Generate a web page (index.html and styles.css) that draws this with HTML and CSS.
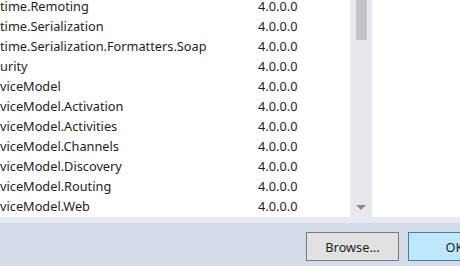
FILE: index.html
```html
<!DOCTYPE html>
<html lang="en">
<head>
  <meta charset="UTF-8">
  <title>Reference Manager</title>
  <link rel="stylesheet" href="styles.css">
</head>
<body>

  <div class="main">
    <div class="lista">
      <div class="filas">
        <div class="fila"><span class="nombre">time.Remoting</span><span class="version">4.0.0.0</span></div>
        <div class="fila"><span class="nombre">time.Serialization</span><span class="version">4.0.0.0</span></div>
        <div class="fila"><span class="nombre">time.Serialization.Formatters.Soap</span><span class="version">4.0.0.0</span></div>
        <div class="fila"><span class="nombre">urity</span><span class="version">4.0.0.0</span></div>
        <div class="fila"><span class="nombre">viceModel</span><span class="version">4.0.0.0</span></div>
        <div class="fila"><span class="nombre">viceModel.Activation</span><span class="version">4.0.0.0</span></div>
        <div class="fila"><span class="nombre">viceModel.Activities</span><span class="version">4.0.0.0</span></div>
        <div class="fila"><span class="nombre">viceModel.Channels</span><span class="version">4.0.0.0</span></div>
        <div class="fila"><span class="nombre">viceModel.Discovery</span><span class="version">4.0.0.0</span></div>
        <div class="fila"><span class="nombre">viceModel.Routing</span><span class="version">4.0.0.0</span></div>
        <div class="fila"><span class="nombre">viceModel.Web</span><span class="version">4.0.0.0</span></div>
      </div>
    </div>

    <div class="scrollbar">
      <div class="thumb"></div>
      <div class="flecha"></div>
    </div>

    <div class="detalle"></div>
  </div>

  <div class="separador"></div>

  <div class="footer">
    <button class="boton">Browse...</button>
    <button class="boton primario">OK</button>
  </div>

</body>
</html>
```

FILE: styles.css
```css
body {
  font-family: 'Noto Sans', sans-serif;
  font-size: 12.75px;
  color: #1e1e1e;
  margin: 0;
  padding: 0;
  width: 460px;
  height: 266px;
  overflow: hidden;
  background: #d6dbe9;
}

.main {
  display: flex;
  height: 217px;
  background: white;
}

.lista {
  width: 350px;
  overflow: hidden;
}

.filas {
  margin-top: -4px;
}

.fila {
  display: flex;
  height: 20px;
  line-height: 20px;
  white-space: nowrap;
}

.nombre {
  width: 258px;
  flex-shrink: 0;
}

.version {
  flex-shrink: 0;
}

.scrollbar {
  width: 22px;
  background: #e8e8ec;
  display: flex;
  flex-direction: column;
  align-items: center;
}

.thumb {
  width: 11px;
  height: 40px;
  background: #c2c3c9;
}

.flecha {
  margin-top: auto;
  margin-bottom: 7px;
  width: 0;
  height: 0;
  border-left: 5px solid transparent;
  border-right: 5px solid transparent;
  border-top: 5px solid #868999;
}

.detalle {
  flex: 1;
}

.separador {
  height: 6px;
  background: #e6e9f3;
}

.footer {
  display: flex;
  gap: 9px;
  padding: 9px 0 0 306px;
}

.boton {
  flex-shrink: 0;
  width: 93px;
  height: 29px;
  font-family: 'Noto Sans', sans-serif;
  font-size: 12.75px;
  color: #1e1e1e;
  background: #e1e1e1;
  border: 1px solid #7a7a7a;
  padding: 0;
}

.primario {
  background: #bee6fd;
  border-color: #3c7fb1;
}
```
